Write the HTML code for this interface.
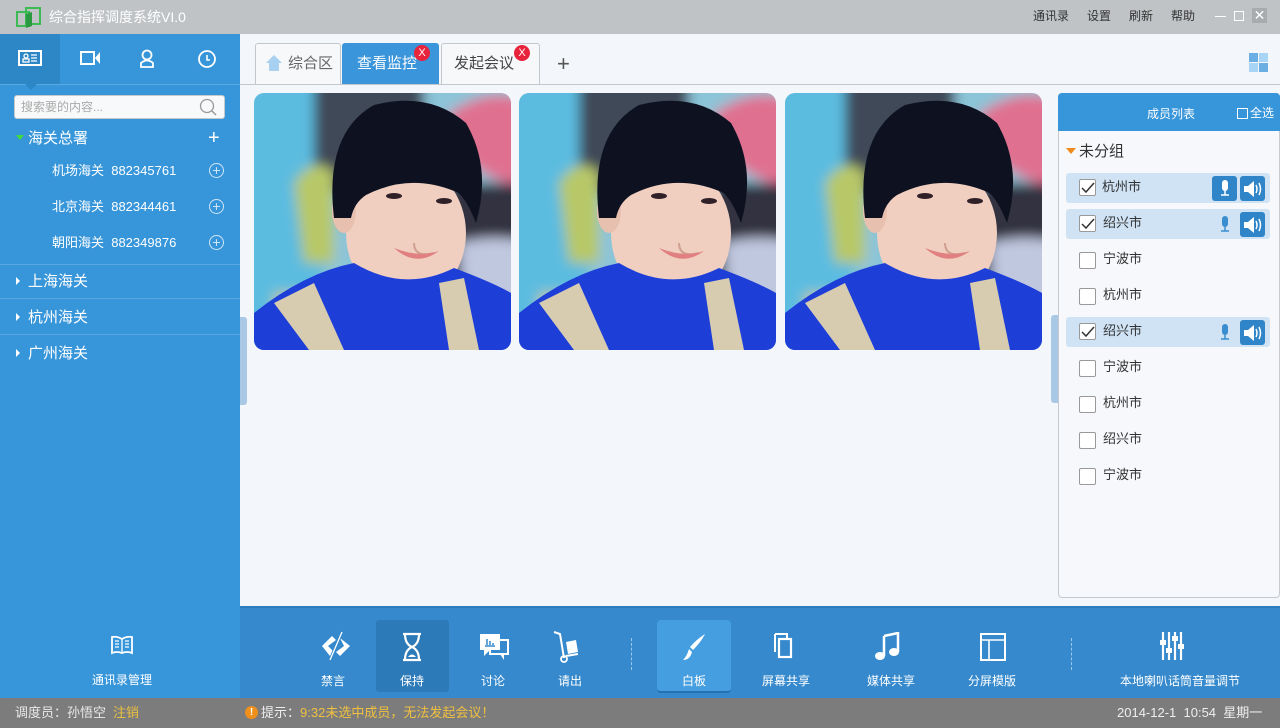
<!DOCTYPE html>
<html><head><meta charset="utf-8"><style>
*{margin:0;padding:0;box-sizing:border-box}
body{width:1280px;height:728px;overflow:hidden;position:relative;background:#f3f6fa;font-family:"Liberation Sans","Noto Sans CJK SC",sans-serif;font-size:13px;line-height:1.15}
.a{position:absolute}
.w{color:#fff}
.title{left:0;top:0;width:1280px;height:34px;background:#c0c3c6}
.side{left:0;top:34px;width:240px;height:664px;background:#3795da}
.tb{top:606px;left:240px;width:1040px;height:92px;background:#3589cc;border-top:2px solid #2a7cc0}
.status{left:0;top:698px;width:1280px;height:30px;background:#7c7c7c}
.tab{top:43px;height:41px;border:1px solid #c3c7cc;border-bottom:none;border-radius:3px 3px 0 0;background:#f7f8fa;font-size:15px;color:#444;line-height:40px}
.x{width:16px;height:16px;border-radius:8px;background:#e8243c;color:#fff;font-size:11px;line-height:16px;text-align:center}
.row{left:1066px;width:204px;height:30px;border-radius:3px}
.cb{width:17px;height:17px;border:1px solid #999;background:#fff;border-radius:2px}
.lbl{font-size:13px;color:#333}
.btn{width:25px;height:25px;background:#2f85c8;border-radius:3px}
.ti{font-size:12px;color:#fff;text-align:center}
</style></head><body>
<div class="a title">
 <svg class="a" style="left:16px;top:6px" width="26" height="24"><rect x="1" y="6" width="12" height="14" fill="none" stroke="#3cba54" stroke-width="2"/><rect x="10" y="2" width="14" height="16" fill="none" stroke="#3cba54" stroke-width="2"/><path d="M10 8 L16 6 L16 20 L10 22Z" fill="#2a9a40"/></svg>
 <div class="a w" style="left:49px;top:9px;font-size:14px">综合指挥调度系统VI.0</div>
 <div class="a" style="left:1033px;top:10px;font-size:12px;color:#333">通讯录</div>
 <div class="a" style="left:1087px;top:10px;font-size:12px;color:#333">设置</div>
 <div class="a" style="left:1129px;top:10px;font-size:12px;color:#333">刷新</div>
 <div class="a" style="left:1171px;top:10px;font-size:12px;color:#333">帮助</div>
 <div class="a" style="left:1215px;top:16px;width:11px;height:1px;background:#fff"></div>
 <div class="a" style="left:1234px;top:11px;width:10px;height:10px;border:1px solid #fff"></div>
 <div class="a" style="left:1252px;top:8px;width:15px;height:15px;background:#a9acaf;color:#fff;font-size:14px;line-height:15px;text-align:center">✕</div>
</div>
<div class="a side">
 <div class="a" style="left:0;top:0;width:60px;height:50px;background:#2d86c6"></div>
 <div class="a" style="left:0;top:50px;width:240px;height:1px;background:#5aa9e4"></div>
 <div class="a" style="left:25px;top:50px;width:0;height:0;border:6px solid transparent;border-top-color:#2d86c6"></div>
 <svg class="a" style="left:18px;top:16px" width="24" height="16"><rect x="1" y="1" width="22" height="14" fill="none" stroke="#fff" stroke-width="2"/><circle cx="8" cy="6" r="2" fill="none" stroke="#fff" stroke-width="1.3"/><rect x="5" y="9" width="6" height="3" fill="none" stroke="#fff" stroke-width="1.3"/><path d="M13 5h6M13 8h6M13 11h6" stroke="#fff" stroke-width="1.3"/></svg>
 <svg class="a" style="left:80px;top:16px" width="22" height="16"><rect x="1" y="2" width="13" height="12" fill="none" stroke="#fff" stroke-width="2"/><path d="M20 2 L15 8 L20 14Z" fill="#fff"/></svg>
 <svg class="a" style="left:139px;top:15px" width="16" height="20"><circle cx="8" cy="6" r="4.5" fill="none" stroke="#fff" stroke-width="1.8"/><path d="M2 18 V14 Q8 9 14 14 V18Z" fill="none" stroke="#fff" stroke-width="1.8"/></svg>
 <svg class="a" style="left:197px;top:15px" width="20" height="20"><circle cx="10" cy="10" r="8" fill="none" stroke="#fff" stroke-width="1.8"/><path d="M10 6v5h3" stroke="#fff" stroke-width="1.6" fill="none"/></svg>
 <div class="a" style="left:14px;top:61px;width:211px;height:24px;background:#f8f9fa;border:1px solid #c6c9cc;border-radius:3px;color:#aaa;font-size:12px;line-height:22px;padding-left:6px">搜索要的内容...</div>
 <svg class="a" style="left:198px;top:64px" width="20" height="20"><circle cx="9" cy="8" r="6.5" fill="none" stroke="#999" stroke-width="1.3"/><path d="M13.5 12.5 L18 17" stroke="#999" stroke-width="1.5"/></svg>
 <div class="a" style="left:16px;top:101px;border:4px solid transparent;border-top:5px solid #3fdc3a"></div>
 <div class="a w" style="left:28px;top:96px;font-size:15px">海关总署</div>
 <div class="a w" style="left:208px;top:93px;font-size:20px;font-weight:300">+</div>
 <div class="a w" style="left:52px;top:130px">机场海关&nbsp; 882345761</div>
 <div class="a w" style="left:52px;top:166px">北京海关&nbsp; 882344461</div>
 <div class="a w" style="left:52px;top:202px">朝阳海关&nbsp; 882349876</div>
 <div class="a" style="left:209px;top:129px;width:15px;height:15px;border:1px solid #d0e6f8;border-radius:50%;color:#d0e6f8;font-size:14px;line-height:12px;text-align:center">+</div>
 <div class="a" style="left:209px;top:165px;width:15px;height:15px;border:1px solid #d0e6f8;border-radius:50%;color:#d0e6f8;font-size:14px;line-height:12px;text-align:center">+</div>
 <div class="a" style="left:209px;top:201px;width:15px;height:15px;border:1px solid #d0e6f8;border-radius:50%;color:#d0e6f8;font-size:14px;line-height:12px;text-align:center">+</div>
 <div class="a" style="left:0;top:230px;width:240px;height:1px;background:#5aa6e0"></div>
 <div class="a" style="left:0;top:264px;width:240px;height:1px;background:#5aa6e0"></div>
 <div class="a" style="left:0;top:300px;width:240px;height:1px;background:#5aa6e0"></div>
 <div class="a" style="left:16px;top:243px;border:4px solid transparent;border-left:4px solid #fff"></div>
 <div class="a" style="left:16px;top:279px;border:4px solid transparent;border-left:4px solid #fff"></div>
 <div class="a" style="left:16px;top:315px;border:4px solid transparent;border-left:4px solid #fff"></div>
 <div class="a w" style="left:28px;top:239px;font-size:15px">上海海关</div>
 <div class="a w" style="left:28px;top:275px;font-size:15px">杭州海关</div>
 <div class="a w" style="left:28px;top:311px;font-size:15px">广州海关</div>
 <svg class="a" style="left:110px;top:601px" width="24" height="20"><path d="M2 2 Q7 1 12 4 Q17 1 22 2 V18 Q17 16 12 18 Q7 16 2 18Z" fill="none" stroke="#fff" stroke-width="1.8"/><path d="M12 4V18M5 6h4M5 9h4M5 12h4M15 6h4M15 9h4M15 12h4" stroke="#fff" stroke-width="1.3"/></svg>
 <div class="a ti" style="left:80px;top:640px;width:84px">通讯录管理</div>
</div>
<div class="a" style="left:240px;top:317px;width:7px;height:88px;background:#a9c8e6;border-radius:0 3px 3px 0"></div>
<div class="a" style="left:1051px;top:315px;width:7px;height:88px;background:#a9c8e6;border-radius:3px 0 0 3px"></div>
<div class="a" style="left:240px;top:84px;width:1040px;height:1px;background:#c3c7cc"></div>
<div class="a tab" style="left:255px;width:86px;padding-left:32px;color:#666">综合区</div>
<svg class="a" style="left:265px;top:54px" width="18" height="18"><path d="M9 1 L17 9 H14 V17 H4 V9 H1Z" fill="#a8d0f0"/></svg>
<div class="a tab" style="left:342px;width:97px;background:#3a95da;border-color:#3a95da;color:#fff;padding-left:14px">查看监控</div>
<div class="a x" style="left:414px;top:45px">X</div>
<div class="a tab" style="left:441px;width:99px;padding-left:12px">发起会议</div>
<div class="a x" style="left:514px;top:45px">X</div>
<div class="a" style="left:557px;top:51px;font-size:22px;color:#555">+</div>
<svg class="a" style="left:1249px;top:53px" width="19" height="19"><rect x="0" y="0" width="9" height="9" fill="#6aaee4"/><rect x="10" y="0" width="9" height="9" fill="#a8d4f6"/><rect x="0" y="10" width="9" height="9" fill="#a8d4f6"/><rect x="10" y="10" width="9" height="9" fill="#6aaee4"/></svg>
<svg width="0" height="0" style="position:absolute"><defs><filter id="bl"><feGaussianBlur stdDeviation="6"/></filter><symbol id="ph" viewBox="0 0 257 257">
<g filter="url(#bl)">
<rect x="-20" y="-20" width="297" height="297" fill="#8cc4d8"/>
<rect x="-20" y="-20" width="90" height="297" fill="#5cbce0"/>
<rect x="20" y="200" width="60" height="57" fill="#c8c890"/>
<rect x="60" y="-20" width="110" height="120" fill="#404858"/>
<path d="M40 90 Q60 60 80 80 L80 170 L50 170Z" fill="#b8c868"/>
<path d="M195 20 Q240 -10 277 10 V95 Q230 90 195 50Z" fill="#e07090"/>
<rect x="190" y="90" width="87" height="100" fill="#303040"/>
<path d="M205 150 Q240 140 277 150 V230 H210Z" fill="#c0c8e0"/>
</g>
<ellipse cx="152" cy="140" rx="60" ry="70" fill="#f0cfc0"/>
<ellipse cx="90" cy="118" rx="12" ry="22" fill="#e8c0b0"/>
<path d="M80 125 Q70 40 120 12 Q175 -2 212 30 Q238 75 222 130 Q210 100 200 98 Q155 80 112 102 Q100 110 97 125Z" fill="#0e1220"/>
<ellipse cx="140" cy="103" rx="8" ry="3" fill="#302028"/>
<ellipse cx="190" cy="108" rx="8" ry="3" fill="#302028"/>
<path d="M160 150 Q160 165 180 160" fill="none" stroke="#d0a090" stroke-width="2"/>
<path d="M140 155 Q162 175 185 158 Q165 165 140 155Z" fill="#e08080"/>
<path d="M0 220 Q50 180 100 170 Q150 200 200 175 Q240 190 257 200 V257 H0Z" fill="#1e3ed8"/>
<path d="M20 210 L60 190 L90 257 H55Z" fill="#d8ccb0"/>
<path d="M185 190 L210 185 L225 257 H195Z" fill="#d8ccb0"/>
</symbol></defs></svg>
<svg class="a" style="left:254px;top:93px;border-radius:10px" width="257" height="257"><use href="#ph"/></svg>
<svg class="a" style="left:519px;top:93px;border-radius:10px" width="257" height="257"><use href="#ph"/></svg>
<svg class="a" style="left:785px;top:93px;border-radius:10px" width="257" height="257"><use href="#ph"/></svg>
<div class="a" style="left:1058px;top:93px;width:222px;height:505px;border:1px solid #c6cacf;border-radius:4px;background:#f6f8fb"></div>
<div class="a" style="left:1058px;top:93px;width:222px;height:38px;background:#3795da;border-radius:4px 4px 0 0"></div>
<div class="a w" style="left:1147px;top:108px;font-size:12px">成员列表</div>
<div class="a" style="left:1237px;top:108px;width:11px;height:11px;border:1px solid #fff"></div>
<div class="a w" style="left:1250px;top:107px;font-size:12px">全选</div>
<div class="a" style="left:1066px;top:148px;border:5px solid transparent;border-top:6px solid #f08a1c"></div>
<div class="a" style="left:1079px;top:143px;font-size:15px;color:#333">未分组</div>
<div class="a row" style="top:173px;background:#cfe3f5"></div>
<div class="a row" style="top:209px;background:#cfe3f5"></div>
<div class="a row" style="top:317px;background:#cfe3f5"></div>
<div class="a cb" style="left:1079px;top:179px"></div><div class="a lbl" style="left:1102px;top:180px">杭州市</div>
<div class="a cb" style="left:1079px;top:215px"></div><div class="a lbl" style="left:1103px;top:216px">绍兴市</div>
<div class="a cb" style="left:1079px;top:252px"></div><div class="a lbl" style="left:1103px;top:252px">宁波市</div>
<div class="a cb" style="left:1079px;top:288px"></div><div class="a lbl" style="left:1103px;top:288px">杭州市</div>
<div class="a cb" style="left:1079px;top:323px"></div><div class="a lbl" style="left:1103px;top:324px">绍兴市</div>
<div class="a cb" style="left:1079px;top:360px"></div><div class="a lbl" style="left:1103px;top:360px">宁波市</div>
<div class="a cb" style="left:1079px;top:396px"></div><div class="a lbl" style="left:1103px;top:396px">杭州市</div>
<div class="a cb" style="left:1079px;top:432px"></div><div class="a lbl" style="left:1103px;top:432px">绍兴市</div>
<div class="a cb" style="left:1079px;top:468px"></div><div class="a lbl" style="left:1103px;top:468px">宁波市</div>
<svg class="a" style="left:1081px;top:182px" width="14" height="12"><path d="M1 6 L5 10 L13 1" fill="none" stroke="#333" stroke-width="1.5"/></svg>
<svg class="a" style="left:1081px;top:218px" width="14" height="12"><path d="M1 6 L5 10 L13 1" fill="none" stroke="#333" stroke-width="1.5"/></svg>
<svg class="a" style="left:1081px;top:326px" width="14" height="12"><path d="M1 6 L5 10 L13 1" fill="none" stroke="#333" stroke-width="1.5"/></svg>
<div class="a btn" style="left:1212px;top:176px"></div>
<svg class="a" style="left:1218px;top:178px" width="14" height="20"><rect x="4" y="2" width="6" height="11" rx="3" fill="#fff"/><path d="M7 13v4M3 17h8" stroke="#fff" stroke-width="1.5"/></svg>
<svg class="a" style="left:1218px;top:214px" width="14" height="20"><rect x="4" y="2" width="6" height="11" rx="3" fill="#3a8ed0"/><path d="M7 13v4M3 17h8" stroke="#3a8ed0" stroke-width="1.5"/></svg>
<svg class="a" style="left:1218px;top:322px" width="14" height="20"><rect x="4" y="2" width="6" height="11" rx="3" fill="#3a8ed0"/><path d="M7 13v4M3 17h8" stroke="#3a8ed0" stroke-width="1.5"/></svg>
<div class="a btn" style="left:1240px;top:176px"></div>
<div class="a btn" style="left:1240px;top:212px"></div>
<div class="a btn" style="left:1240px;top:320px"></div>
<svg class="a" style="left:1242px;top:179px" width="22" height="20"><path d="M2 7h4l6-5v16l-6-5H2Z" fill="#fff"/><path d="M14 6q2 4 0 8M17 4q3 6 0 12" fill="none" stroke="#fff" stroke-width="1.5"/></svg>
<svg class="a" style="left:1242px;top:215px" width="22" height="20"><path d="M2 7h4l6-5v16l-6-5H2Z" fill="#fff"/><path d="M14 6q2 4 0 8M17 4q3 6 0 12" fill="none" stroke="#fff" stroke-width="1.5"/></svg>
<svg class="a" style="left:1242px;top:323px" width="22" height="20"><path d="M2 7h4l6-5v16l-6-5H2Z" fill="#fff"/><path d="M14 6q2 4 0 8M17 4q3 6 0 12" fill="none" stroke="#fff" stroke-width="1.5"/></svg>
<div class="a tb">
 <div class="a" style="left:136px;top:12px;width:73px;height:72px;background:#2d7ab8;border-radius:3px"></div>
 <div class="a" style="left:417px;top:12px;width:74px;height:73px;background:#459edf;border-radius:4px;border-bottom:2px solid #2470b0"></div>
 <div class="a" style="left:391px;top:30px;width:1px;height:32px;border-left:1px dashed #9cc8ec"></div>
 <div class="a" style="left:831px;top:30px;width:1px;height:32px;border-left:1px dashed #9cc8ec"></div>
 <svg class="a" style="left:78px;top:22px" width="36" height="32"><path d="M4 16 L14 6 L18 10 L10 16 L16 22 L12 26Z" fill="#fff"/><path d="M22 8 L32 16 L22 26 L18 22 L26 16Z" fill="#fff"/><path d="M24 2 L12 30" stroke="#3589cc" stroke-width="3"/><path d="M24 2 L12 30" stroke="#fff" stroke-width="1.3"/></svg>
 <svg class="a" style="left:160px;top:24px" width="24" height="30"><path d="M3 2h18M3 28h18M5 2 Q5 12 12 15 Q19 12 19 2M5 28 Q5 18 12 15 Q19 18 19 28" fill="none" stroke="#fff" stroke-width="2.2"/><path d="M8 25 Q12 20 16 25Z" fill="#fff"/></svg>
 <svg class="a" style="left:238px;top:24px" width="32" height="30"><rect x="2" y="2" width="20" height="16" fill="#fff"/><path d="M6 18 L6 24 L12 18Z" fill="#fff"/><rect x="12" y="8" width="18" height="14" fill="none" stroke="#fff" stroke-width="2"/><path d="M22 22 L26 28 L26 22" fill="#fff"/><path d="M7 14h10M9 7v6M12 9v4M15 11v2" stroke="#3589cc" stroke-width="1.5"/></svg>
 <svg class="a" style="left:312px;top:22px" width="28" height="34"><path d="M2 2 L8 4 L12 28" fill="none" stroke="#fff" stroke-width="2"/><circle cx="12" cy="29" r="3" fill="none" stroke="#fff" stroke-width="1.8"/><path d="M14 12 L24 10 L26 22 L16 24Z" fill="#fff"/><path d="M14 26 L26 24" stroke="#fff" stroke-width="2"/></svg>
 <svg class="a" style="left:441px;top:24px" width="28" height="32"><path d="M24 2 Q20 10 12 18 L9 15 Q16 7 24 2Z" fill="#fff"/><path d="M8 17 L11 20 Q9 28 2 28 Q6 24 8 17Z" fill="#fff"/></svg>
 <svg class="a" style="left:531px;top:24px" width="24" height="30"><path d="M4 2h12v4" fill="none" stroke="#fff" stroke-width="2"/><path d="M4 2v18" stroke="#fff" stroke-width="2"/><rect x="8" y="7" width="12" height="18" fill="none" stroke="#fff" stroke-width="2.2"/></svg>
 <svg class="a" style="left:634px;top:24px" width="28" height="30"><path d="M10 4 L24 1 V20" fill="none" stroke="#fff" stroke-width="2.5"/><path d="M10 4 V24" stroke="#fff" stroke-width="2.5"/><ellipse cx="6" cy="24" rx="5" ry="4" fill="#fff"/><ellipse cx="20" cy="20" rx="5" ry="4" fill="#fff"/></svg>
 <svg class="a" style="left:739px;top:24px" width="28" height="30"><rect x="2" y="2" width="24" height="26" fill="none" stroke="#fff" stroke-width="2"/><path d="M2 8h24M10 8v20" stroke="#fff" stroke-width="1.6"/></svg>
 <svg class="a" style="left:919px;top:22px" width="26" height="32"><path d="M4 2v28M10 2v28M16 2v28M22 2v28" stroke="#fff" stroke-width="2.2"/><rect x="1" y="10" width="6" height="5" fill="#fff"/><rect x="7" y="18" width="6" height="5" fill="#fff"/><rect x="13" y="6" width="6" height="5" fill="#fff"/><rect x="19" y="14" width="6" height="5" fill="#fff"/></svg>
 <div class="a ti" style="left:68px;top:67px;width:50px">禁言</div>
 <div class="a ti" style="left:147px;top:67px;width:50px">保持</div>
 <div class="a ti" style="left:228px;top:67px;width:50px">讨论</div>
 <div class="a ti" style="left:305px;top:67px;width:50px">请出</div>
 <div class="a ti" style="left:429px;top:67px;width:50px">白板</div>
 <div class="a ti" style="left:506px;top:67px;width:80px">屏幕共享</div>
 <div class="a ti" style="left:611px;top:67px;width:80px">媒体共享</div>
 <div class="a ti" style="left:712px;top:67px;width:80px">分屏模版</div>
 <div class="a ti" style="left:870px;top:67px;width:140px">本地喇叭话筒音量调节</div>
</div>
<div class="a status">
 <div class="a" style="left:15px;top:8px;color:#e8e8e8;font-size:13px">调度员：孙悟空</div>
 <div class="a" style="left:113px;top:8px;color:#e8c040;font-size:13px">注销</div>
 <div class="a" style="left:245px;top:8px;width:13px;height:13px;border-radius:50%;background:#f0901c;color:#fff;font-size:10px;line-height:13px;text-align:center;font-weight:bold">!</div>
 <div class="a" style="left:261px;top:8px;color:#eee;font-size:13px">提示：<span style="color:#f0c040">9:32未选中成员，无法发起会议！</span></div>
 <div class="a" style="left:1117px;top:8px;color:#eee;font-size:13px">2014-12-1&nbsp; 10:54&nbsp; 星期一</div>
</div>
</body></html>
